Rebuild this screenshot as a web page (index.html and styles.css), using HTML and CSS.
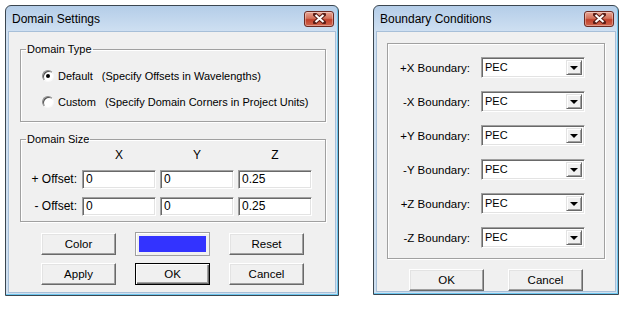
FILE: index.html
```html
<!DOCTYPE html>
<html lang="en">
<head>
  <meta charset="UTF-8" />
  <title>Domain Settings / Boundary Conditions</title>
  <link rel="stylesheet" href="styles.css">
</head>
<body>

<div class="desktop">

  <!-- Domain Settings dialog -->
  <div class="window win-domain">
    <div class="titlebar">
      <span class="title">Domain Settings</span>
      <span class="close">
        <svg width="13" height="11" viewBox="0 0 13 11">
          <path d="M2 1.5 L11 9.5 M11 1.5 L2 9.5" stroke="#5a1d16" stroke-width="4" stroke-linecap="square"/>
          <path d="M2.5 2 L10.5 9 M10.5 2 L2.5 9" stroke="#fff" stroke-width="2"/>
        </svg>
      </span>
    </div>
    <div class="client">
      <fieldset class="group type-group">
        <legend>Domain Type</legend>
        <div class="radios">
          <div class="radio-row"><span class="radio checked"></span><span>Default</span><span class="note">(Specify Offsets in Wavelengths)</span></div>
          <div class="radio-row"><span class="radio"></span><span>Custom</span><span class="note">(Specify Domain Corners in Project Units)</span></div>
        </div>
      </fieldset>

      <fieldset class="group size-group">
        <legend>Domain Size</legend>
        <div class="size-grid">
          <span></span>
          <span class="axis">X</span>
          <span class="axis">Y</span>
          <span class="axis">Z</span>
          <span class="row-label">+ Offset:</span>
          <span class="field">0</span>
          <span class="field">0</span>
          <span class="field">0.25</span>
          <span class="row-label">- Offset:</span>
          <span class="field">0</span>
          <span class="field">0</span>
          <span class="field">0.25</span>
        </div>
      </fieldset>

      <div class="button-grid">
        <span class="btn">Color</span>
        <span class="swatch"><span class="swatch-fill"></span></span>
        <span class="btn">Reset</span>
        <span class="btn">Apply</span>
        <span class="btn default">OK</span>
        <span class="btn">Cancel</span>
      </div>
    </div>
  </div>

  <!-- Boundary Conditions dialog -->
  <div class="window win-boundary">
    <div class="titlebar">
      <span class="title">Boundary Conditions</span>
      <span class="close">
        <svg width="13" height="11" viewBox="0 0 13 11">
          <path d="M2 1.5 L11 9.5 M11 1.5 L2 9.5" stroke="#5a1d16" stroke-width="4" stroke-linecap="square"/>
          <path d="M2.5 2 L10.5 9 M10.5 2 L2.5 9" stroke="#fff" stroke-width="2"/>
        </svg>
      </span>
    </div>
    <div class="client">
      <div class="group boundary-group">
        <div class="bc-row"><span class="bc-label">+X Boundary:</span><span class="combo"><span class="combo-text">PEC</span><span class="combo-btn"></span></span></div>
        <div class="bc-row"><span class="bc-label">-X Boundary:</span><span class="combo"><span class="combo-text">PEC</span><span class="combo-btn"></span></span></div>
        <div class="bc-row"><span class="bc-label">+Y Boundary:</span><span class="combo"><span class="combo-text">PEC</span><span class="combo-btn"></span></span></div>
        <div class="bc-row"><span class="bc-label">-Y Boundary:</span><span class="combo"><span class="combo-text">PEC</span><span class="combo-btn"></span></span></div>
        <div class="bc-row"><span class="bc-label">+Z Boundary:</span><span class="combo"><span class="combo-text">PEC</span><span class="combo-btn"></span></span></div>
        <div class="bc-row"><span class="bc-label">-Z Boundary:</span><span class="combo"><span class="combo-text">PEC</span><span class="combo-btn"></span></span></div>
      </div>
      <div class="bc-buttons">
        <span class="btn">OK</span>
        <span class="btn">Cancel</span>
      </div>
    </div>
  </div>

</div>

</body>
</html>
```

FILE: styles.css
```css
* {
  box-sizing: border-box;
}

body {
  margin: 0;
  background-color: #fff;
  font-family: 'Liberation Sans', Arial, sans-serif;
  font-size: 11px;
  color: #000;
}

.desktop {
  display: flex;
  align-items: flex-start;
  gap: 34px;
  padding: 5px 0 0 5px;
}

/* window frame */
.window {
  border: 1px solid #3b4650;
  border-radius: 6px 6px 0 0;
  background: linear-gradient(to bottom, #b4cde8 0, #cfe0f2 26px, #cfe0f1 100%);
  padding: 0 2px 2px;
  box-shadow: inset -1px -1px 0 #6cc6ee;
}

.win-domain {
  width: 334px;
  height: 291px;
}

.win-boundary {
  width: 246px;
  height: 290px;
}

.titlebar {
  height: 25px;
  display: flex;
  align-items: center;
  justify-content: space-between;
  padding: 0 2px 0 4px;
}

.title {
  font-size: 12px;
  color: #000;
}

.close {
  width: 30px;
  height: 16px;
  border: 1px solid #6b2a22;
  border-radius: 3px;
  background: linear-gradient(to bottom, #e8a493 0, #d2715a 45%, #c1402a 55%, #d0674f 100%);
  box-shadow: inset 0 0 0 1px rgba(255, 255, 255, 0.35);
  display: flex;
  align-items: center;
  justify-content: center;
}

.client {
  background-color: #f0f0f0;
  border: 1px solid #a7bfd8;
  height: calc(100% - 25px);
}

/* group boxes */
.group {
  border: 1px solid #a0a0a0;
  box-shadow: 1px 1px 0 #fff, inset 1px 1px 0 #fff;
  margin: 0;
  padding: 0;
}

.group legend {
  margin-left: 5px;
  padding: 0 1px;
  line-height: 14px;
}

.win-domain .client {
  padding: 10px 9px 0 11px;
}

.type-group {
  height: 80px;
}

.radios {
  display: flex;
  flex-direction: column;
  gap: 10px;
  padding: 12px 0 0 21px;
}

.radio-row {
  display: flex;
  align-items: center;
  height: 16px;
}

.radio {
  width: 12px;
  height: 12px;
  border-radius: 50%;
  border: 1px solid;
  border-color: #8a8a8a #f8f8f8 #f8f8f8 #8a8a8a;
  box-shadow: inset 1px 1px 0 #505050;
  background-color: #fff;
  margin-right: 4px;
  display: flex;
  align-items: center;
  justify-content: center;
}

.radio.checked::after {
  content: "";
  width: 4px;
  height: 4px;
  border-radius: 50%;
  background-color: #000;
}

.note {
  margin-left: 9px;
}

.size-group {
  margin-top: 10px;
  height: 90px;
}

.size-grid {
  display: grid;
  grid-template-columns: 57px 74px 74px 74px;
  grid-template-rows: 14px 19px 19px;
  column-gap: 4px;
  row-gap: 8px;
  margin-top: 2px;
}

.size-grid .axis {
  text-align: center;
  line-height: 14px;
  margin-bottom: -7px;
  font-size: 12px;
}

.row-label {
  text-align: right;
  padding-right: 1px;
  line-height: 19px;
  font-size: 12px;
}

.field {
  background-color: #fff;
  border: 1px solid;
  border-color: #a0a0a0 #fff #fff #a0a0a0;
  box-shadow: inset 1px 1px 0 #696969, inset -1px -1px 0 #e3e3e3;
  padding-left: 3px;
  line-height: 17px;
  font-size: 12px;
}

/* buttons */
.button-grid {
  display: grid;
  grid-template-columns: 75px 75px 75px;
  grid-auto-rows: 22px;
  column-gap: 19px;
  row-gap: 8px;
  margin: 11px 0 0 21px;
}

.btn {
  display: flex;
  align-items: center;
  justify-content: center;
  width: 75px;
  height: 22px;
  background-color: #f0f0f0;
  border: 1px solid;
  border-color: #fff #696969 #696969 #fff;
  box-shadow: inset -1px -1px 0 #a0a0a0, inset 1px 1px 0 #e3e3e3;
  font-size: 11.5px;
}

.btn.default {
  border-color: #000;
  box-shadow: inset 1px 1px 0 #fff, inset -1px -1px 0 #696969, inset -2px -2px 0 #a0a0a0;
}

.swatch {
  border: 1px solid #a0a0a0;
  box-shadow: inset 1px 1px 0 #fff;
  padding: 3px;
  height: 24px;
  margin-top: -1px;
}

.swatch-fill {
  display: block;
  height: 100%;
  background-color: #3333ff;
}

/* boundary dialog */
.win-boundary .client {
  padding: 11px 10px 0 10px;
}

.boundary-group {
  height: 216px;
  padding: 13px 0 0 0;
  display: flex;
  flex-direction: column;
  gap: 13px;
}

.bc-row {
  display: flex;
  align-items: center;
  height: 21px;
}

.bc-label {
  width: 82px;
  text-align: right;
  font-size: 11.5px;
}

.combo {
  margin-left: 11px;
  width: 104px;
  height: 21px;
  background-color: #fff;
  border: 1px solid;
  border-color: #a0a0a0 #fff #fff #a0a0a0;
  box-shadow: inset 1px 1px 0 #696969, inset -1px -1px 0 #e3e3e3;
  display: flex;
  padding: 2px;
}

.combo-text {
  flex: 1;
  padding-left: 1px;
  line-height: 15px;
  font-size: 11px;
}

.combo-btn {
  width: 16px;
  height: 15px;
  background-color: #f0f0f0;
  border: 1px solid;
  border-color: #e3e3e3 #696969 #696969 #e3e3e3;
  box-shadow: inset 1px 1px 0 #fff, inset -1px -1px 0 #a0a0a0;
  display: flex;
  align-items: center;
  justify-content: center;
}

.combo-btn::after {
  content: "";
  border-left: 4px solid transparent;
  border-right: 4px solid transparent;
  border-top: 4px solid #000;
}

.bc-buttons {
  display: flex;
  gap: 24px;
  margin: 10px 0 0 22px;
}
```
